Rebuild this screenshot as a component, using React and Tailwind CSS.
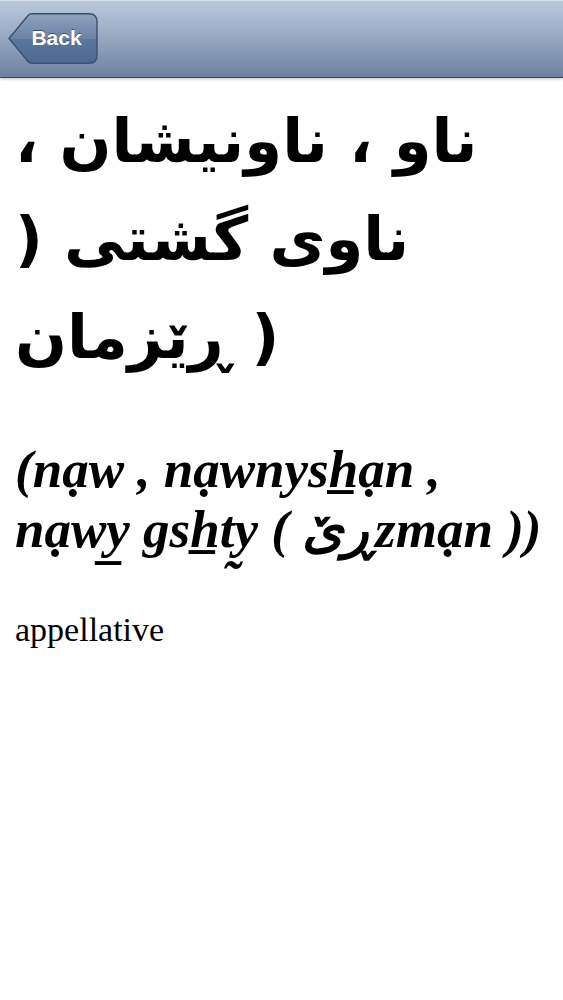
export default function App() {
  return (
    <div className="min-h-[1000px] bg-white">
      <div className="relative h-[78px] bg-gradient-to-b from-[#bccade] via-[#95a7c0] to-[#6b82a2] border-b border-[#34465f] shadow-[0_1px_3px_rgba(0,0,0,0.25)] flex items-center pl-[8px]">
        <div className="absolute inset-x-0 top-0 h-px bg-[#d8e0ea]" />
        <div className="relative w-[90px] h-[51px] flex items-center justify-center pl-[7px] mt-[-1px]">
          <svg className="absolute inset-0" width="90" height="51" viewBox="0 0 90 51">
            <defs>
              <linearGradient id="bb" x1="0" y1="0" x2="0" y2="1">
                <stop offset="0" stopColor="#8fa3bf" />
                <stop offset="0.5" stopColor="#6a82a6" />
                <stop offset="0.52" stopColor="#5b769d" />
                <stop offset="1" stopColor="#4d6891" />
              </linearGradient>
            </defs>
            <path d="M1 25.5 L20 2.5 Q21.5 0.8 24 0.8 L81 0.8 Q89 0.8 89 8.8 L89 42.2 Q89 50.2 81 50.2 L24 50.2 Q21.5 50.2 20 48.5 Z" fill="url(#bb)" stroke="#3b5072" strokeWidth="1.4" />
          </svg>
          <span className="relative text-white font-bold text-[21px] [font-family:'Liberation_Sans',Arial,sans-serif] [text-shadow:0_-1px_0_rgba(0,0,0,0.45)]">Back</span>
        </div>
      </div>
      <div className="px-[15px] pt-[14px]">
        <p dir="ltr" className="text-black font-bold text-[61px] leading-[98px] [font-family:'DejaVu_Sans',sans-serif]">
          {"ناو ، ناونیشان ، ناوی گشتی ( ڕێزمان \u2066)\u2069"}
        </p>
        <p className="mt-[53px] text-black font-bold italic text-[53px] leading-[60px] [font-family:'Liberation_Serif','DejaVu_Serif',serif]">
          (nạw , nạwnysh̲ạn , nạwy̲ gsh̲ty̰ ( ڕێzmạn ))
        </p>
        <p className="mt-[51px] text-black text-[34px] leading-[40px] [font-family:'Liberation_Serif',serif]">
          appellative
        </p>
      </div>
    </div>
  );
}
